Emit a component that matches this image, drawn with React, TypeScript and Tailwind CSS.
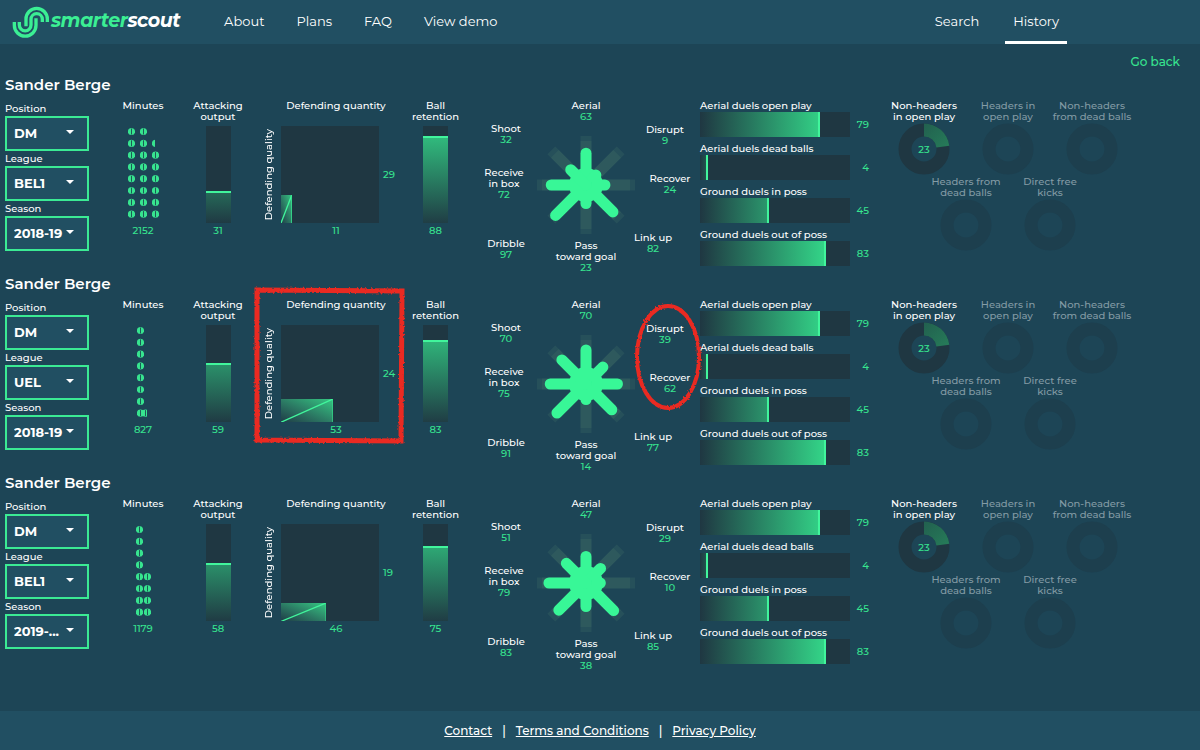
import React, { useId } from "react";

type Report = {
  position: string;
  league: string;
  season: string;
  minutes: number;
  dots: { x: number; width: number }[][];
  attacking: number;
  quality: number;
  quantity: number;
  retention: number;
  style: number[];
  mark: boolean;
};

const full = (...xs: number[]) => xs.map((x) => ({ x, width: 7 }));
const repeat = <T,>(n: number, item: T): T[] => Array.from({ length: n }, () => item);

const reports: Report[] = [
  {
    position: "DM",
    league: "BEL1",
    season: "2018-19",
    minutes: 2152,
    dots: [full(5, 17), [...full(5, 17), { x: 29, width: 3 }], ...repeat(6, full(5, 17, 29))],
    attacking: 31,
    quality: 29,
    quantity: 11,
    retention: 88,
    style: [63, 9, 24, 82, 23, 97, 72, 32],
    mark: false,
  },
  {
    position: "DM",
    league: "UEL",
    season: "2018-19",
    minutes: 827,
    dots: [...repeat(7, full(14)), [...full(14), { x: 19, width: 5 }]],
    attacking: 59,
    quality: 24,
    quantity: 53,
    retention: 83,
    style: [70, 39, 62, 77, 14, 91, 75, 70],
    mark: true,
  },
  {
    position: "DM",
    league: "BEL1",
    season: "2019-...",
    minutes: 1179,
    dots: [...repeat(4, full(13)), ...repeat(4, full(13, 21))],
    attacking: 58,
    quality: 19,
    quantity: 46,
    retention: 75,
    style: [47, 29, 10, 85, 38, 83, 79, 51],
    mark: false,
  },
];

const duels = [
  { label: "Aerial duels open play", value: 79 },
  { label: "Aerial duels dead balls", value: 4 },
  { label: "Ground duels in poss", value: 45 },
  { label: "Ground duels out of poss", value: 83 },
];

const spokes = [
  { lines: ["Aerial"], place: "left-[114px] top-[2px]" },
  { lines: ["Disrupt"], place: "left-[193px] top-[26px]" },
  { lines: ["Recover"], place: "left-[198px] top-[75px]" },
  { lines: ["Link up"], place: "left-[181px] top-[134px]" },
  { lines: ["Pass", "toward goal"], place: "left-[114px] top-[142px]" },
  { lines: ["Dribble"], place: "left-[34px] top-[140px]" },
  { lines: ["Receive", "in box"], place: "left-[32px] top-[69px]" },
  { lines: ["Shoot"], place: "left-[34px] top-[25px]" },
];

function Logo() {
  return (
    <a href="#" className="flex items-center gap-px">
      <svg viewBox="36 18 114 96" className="h-8 w-[38px]" fill="none" stroke="#3bef94" strokeWidth="10">
        <path d="M142 66V57A32 32 0 0 0 78 57V79" />
        <path d="M127 66V58A17 17 0 0 0 93 58V75A17.5 17.5 0 0 1 58 75V66" />
        <path d="M43 66V76A32.5 32.5 0 0 0 108 76V55" />
      </svg>
      <span className="pb-[3px] text-[19px] leading-6 font-bold tracking-tight text-white italic">
        <span className="text-[#3bef94]">smarter</span>scout
      </span>
    </a>
  );
}

function Header() {
  return (
    <header className="flex h-11 items-center justify-between bg-[#214f62] pl-3 pr-[133px] text-[13px] text-white">
      <div className="flex items-center gap-11">
        <Logo />
        <nav className="flex items-center gap-8">
          <a href="#about">About</a>
          <a href="#plans">Plans</a>
          <a href="#faq">FAQ</a>
          <a href="#demo">View demo</a>
        </nav>
      </div>
      <nav className="flex h-full gap-[18px]">
        <a href="#search" className="flex h-full items-center border-y-3 border-transparent px-2">
          Search
        </a>
        <a href="#history" className="flex h-full items-center border-y-3 border-t-transparent border-b-white px-2">
          History
        </a>
      </nav>
    </header>
  );
}

function Picker({ label, value }: { label: string; value: string }) {
  const id = useId();
  return (
    <div>
      <label htmlFor={id} className="block leading-[15px]">
        {label}
      </label>
      <div className="relative">
        <select
          id={id}
          defaultValue={value}
          className="h-[35px] w-full appearance-none border-2 border-[#3bea94] bg-[#214f62] pl-[7px] text-[13px] font-bold text-white"
        >
          <option>{value}</option>
        </select>
        <svg viewBox="0 0 8 4" className="pointer-events-none absolute top-[14px] right-[15px] h-1 w-2">
          <path d="M0 0H8L4 4Z" fill="white" />
        </svg>
      </div>
    </div>
  );
}

function Minutes({ report }: { report: Report }) {
  return (
    <div className="flex flex-col items-center pt-[3px]">
      <h3 className="mb-1 h-[22px]">Minutes</h3>
      <svg viewBox="0 0 40 97" className="h-[97px] w-10">
        {report.dots.map((row, i) =>
          row.map((dot) => (
            <g key={`${i}-${dot.x}`}>
              <clipPath id={`m${report.minutes}-${i}-${dot.x}`}>
                <rect x={dot.x} y={0} width={dot.width} height={98} />
              </clipPath>
              <g clipPath={`url(#m${report.minutes}-${i}-${dot.x})`}>
                <circle cx={dot.x + 3.5} cy={5.5 + i * 11.8} r={3.6} fill="#37e48f" />
                <rect x={dot.x + 3} y={2.5 + i * 11.8} width={1} height={6} fill="#1d5a57" />
              </g>
            </g>
          )),
        )}
      </svg>
      <span className="mt-[2px] text-[#37e48f]">{report.minutes}</span>
    </div>
  );
}

function Column({ lines, value }: { lines: string[]; value: number }) {
  return (
    <div className="flex flex-col items-center pt-[3px] text-center">
      <h3 className="mb-1 h-[22px]">
        {lines[0]}
        <br />
        {lines[1]}
      </h3>
      <div className="flex h-[97px] w-[25px] flex-col justify-end bg-[#1f3742]">
        <div className="border-t-2 border-[#41f59c]" style={{ height: `${value + 2}%` }}>
          <div
            className="h-full bg-linear-to-b from-[#34d488] to-[#34d488]/5"
            style={{ opacity: value / 110 + 0.03 }}
          />
        </div>
      </div>
      <span className="mt-[2px] text-[#37e48f]">{value}</span>
    </div>
  );
}

function RedBox() {
  return (
    <svg viewBox="0 0 152 160" className="pointer-events-none absolute -top-[10px] -left-[2px] h-40 w-[152px]">
      <filter id="crayon" x="-5%" y="-5%" width="110%" height="110%">
        <feTurbulence type="fractalNoise" baseFrequency="0.5" numOctaves="2" seed="4" />
        <feDisplacementMap in="SourceGraphic" scale="3" />
      </filter>
      <path d="M4 4L149 5L148 155L4 154Z" fill="none" stroke="#ea2a20" strokeWidth="5" filter="url(#crayon)" />
    </svg>
  );
}

function RedOval() {
  return (
    <svg viewBox="0 0 70 112" className="pointer-events-none absolute top-[4px] left-[161px] h-28 w-[70px]">
      <ellipse cx="35" cy="56" rx="31" ry="51" fill="none" stroke="#ea2a20" strokeWidth="4" filter="url(#crayon)" />
    </svg>
  );
}

function Defending({ report }: { report: Report }) {
  return (
    <div className="relative pt-[3px]">
      <h3 className="mb-1 h-[22px] pl-[18px] text-center whitespace-nowrap">Defending quantity</h3>
      <div className="flex justify-center">
        <div className="flex w-[26px] items-center justify-center">
          <span className="rotate-180 whitespace-nowrap [writing-mode:vertical-rl]">Defending quality</span>
        </div>
        <div className="flex h-[97px] w-[98px] shrink-0 items-end bg-[#1f3742]">
          <div
            className="bg-linear-to-tr from-[#1f3d47] to-[#34c882]"
            style={{ width: `${report.quantity}%`, height: `${report.quality}%` }}
          >
            <svg viewBox="0 0 100 100" preserveAspectRatio="none" className="size-full">
              <path d="M0 100L100 0" stroke="#41f59c" strokeWidth="1.3" vectorEffect="non-scaling-stroke" />
              <path d="M100 0V100" stroke="#37e48f" strokeWidth="1" vectorEffect="non-scaling-stroke" />
            </svg>
          </div>
        </div>
        <span className="flex w-5 items-center pl-1 text-[#37e48f]">{report.quality}</span>
      </div>
      <div className="mt-[2px] pl-[18px] text-center text-[#37e48f]">{report.quantity}</div>
      {report.mark && <RedBox />}
    </div>
  );
}

function StyleChart({ report }: { report: Report }) {
  return (
    <div className="pt-px">
      <div className="relative mx-auto h-[174px] w-[228px]">
        <svg viewBox="0 0 228 174" className="h-[174px] w-[228px]">
          {[
            { tip: 43, opacity: 0.14 },
            { tip: 38, opacity: 0.14 },
          ].map((layer) => (
            <g key={layer.tip} stroke="#5f9472" strokeWidth="11" opacity={layer.opacity}>
              {report.style.map((_, i) => (
                <path key={i} d={`M114 87V${layer.tip}`} transform={`rotate(${i * 45} 114 87)`} />
              ))}
            </g>
          ))}
          <circle cx="114" cy="87" r="17" fill="#38f797" />
          {report.style.map((value, i) => (
            <path
              key={i}
              d={`M114 87V${87 - 11 - value * 0.33}`}
              transform={`rotate(${i * 45} 114 87)`}
              stroke="#38f797"
              strokeWidth="11"
              strokeLinecap="round"
            />
          ))}
        </svg>
        {spokes.map((spoke, i) => (
          <div
            key={spoke.lines[0]}
            className={`absolute -translate-x-1/2 text-center whitespace-nowrap ${spoke.place}`}
          >
            {spoke.lines.map((line) => (
              <div key={line}>{line}</div>
            ))}
            <div className="text-[#37e48f]">{report.style[i]}</div>
          </div>
        ))}
        {report.mark && <RedOval />}
      </div>
    </div>
  );
}

function Duels() {
  return (
    <div className="flex flex-col gap-[6px] pt-[3px]">
      {duels.map((duel) => (
        <div key={duel.label}>
          <h3 className="mb-px">{duel.label}</h3>
          <div className="flex items-center">
            <div className="h-[25px] w-[150px] bg-[#1f3742]">
              <div className="h-full border-r-2 border-[#41f59c]" style={{ width: `${duel.value + 1}%` }}>
                <div
                  className="h-full bg-linear-to-r from-[#34dc8b]/0 to-[#34dc8b]"
                  style={{ opacity: duel.value / 100 + 0.12 }}
                />
              </div>
            </div>
            <span className="w-[19px] text-right text-[#37e48f]">{duel.value}</span>
          </div>
        </div>
      ))}
    </div>
  );
}

function Donut({ lines, value }: { lines: string[]; value?: number }) {
  const active = value !== undefined;
  const angle = ((value ?? 0) / 100) * 2 * Math.PI;
  const at = (r: number) => `${26 + r * Math.sin(angle)} ${26 - r * Math.cos(angle)}`;
  return (
    <div className="flex w-[84px] flex-col items-center text-center whitespace-nowrap">
      <h3 className={active ? "text-white" : "text-[#839ba5]"}>
        {lines[0]}
        <br />
        {lines[1]}
      </h3>
      <svg viewBox="0 0 52 52" className="mt-px size-[52px]">
        <linearGradient id="slice" x1="0" y1="0" x2="1" y2="1">
          <stop offset="0" stopColor="#22604f" />
          <stop offset="1" stopColor="#267c59" />
        </linearGradient>
        <circle cx="26" cy="26" r="19" fill="none" stroke={active ? "#1f3742" : "#1d3f4e"} strokeWidth="13" />
        {active && (
          <>
            <path d={`M26 .5A25.5 25.5 0 0 1 ${at(25.5)}L${at(12.5)}A12.5 12.5 0 0 0 26 13.5Z`} fill="url(#slice)" />
            <text x="26" y="30" textAnchor="middle" fontSize="10" fill="#37e48f">
              {value}
            </text>
          </>
        )}
      </svg>
    </div>
  );
}

function Shots() {
  return (
    <div className="flex w-[252px] flex-wrap content-start justify-center gap-y-px pt-[3px]">
      <Donut lines={["Non-headers", "in open play"]} value={23} />
      <Donut lines={["Headers in", "open play"]} />
      <Donut lines={["Non-headers", "from dead balls"]} />
      <Donut lines={["Headers from", "dead balls"]} />
      <Donut lines={["Direct free", "kicks"]} />
    </div>
  );
}

function PlayerReport({ report }: { report: Report }) {
  return (
    <section className="px-[5px]">
      <h2 className="text-[15px] leading-6 font-semibold">Sander Berge</h2>
      <div className="grid grid-cols-[100px_76fr_74fr_144fr_73fr_228fr_182fr_313fr] text-[10px] leading-[11px] font-medium">
        <div className="w-[84px] pt-1">
          <Picker label="Position" value={report.position} />
          <Picker label="League" value={report.league} />
          <Picker label="Season" value={report.season} />
        </div>
        <Minutes report={report} />
        <Column lines={["Attacking", "output"]} value={report.attacking} />
        <Defending report={report} />
        <Column lines={["Ball", "retention"]} value={report.retention} />
        <StyleChart report={report} />
        <Duels />
        <Shots />
      </div>
    </section>
  );
}

export default function App() {
  return (
    <div className="flex min-h-screen flex-col bg-[#1d4556] font-['Montserrat','Inter',sans-serif] text-white">
      <Header />
      <main className="flex-1">
        <div className="flex justify-end pt-2 pr-5 pb-px text-[12px] leading-5 font-medium">
          <a href="#back" className="text-[#37e48f]">
            Go back
          </a>
        </div>
        {reports.map((report) => (
          <PlayerReport key={report.minutes} report={report} />
        ))}
      </main>
      <footer className="flex h-[39px] items-center justify-center gap-[10px] bg-[#214f62] text-[12px] font-medium">
        <a href="#contact" className="underline">
          Contact
        </a>
        <span>|</span>
        <a href="#terms" className="underline">
          Terms and Conditions
        </a>
        <span>|</span>
        <a href="#privacy" className="underline">
          Privacy Policy
        </a>
      </footer>
    </div>
  );
}
